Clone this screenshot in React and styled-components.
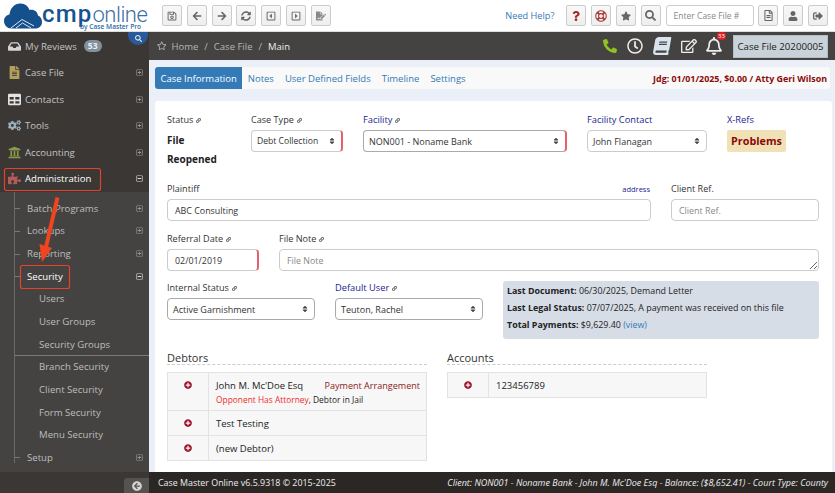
import React from 'react'
import styled, { createGlobalStyle } from 'styled-components'
import {
  FaRegSave, FaArrowLeft, FaArrowRight, FaSyncAlt, FaRegCaretSquareLeft, FaRegCaretSquareRight,
  FaQuestion, FaRegLifeRing, FaStar, FaSearch, FaRegFileAlt, FaUser, FaSignOutAlt, FaInbox,
  FaFileAlt, FaTable, FaCogs, FaUniversity, FaPuzzlePiece, FaRegPlusSquare, FaRegMinusSquare,
  FaRegStar, FaPhone, FaRegClock, FaBook, FaRegEdit, FaRegBell, FaLink, FaSort, FaPlusCircle,
  FaArrowCircleLeft, FaFileSignature,
} from 'react-icons/fa'

const Global = createGlobalStyle`
  html, body { margin: 0; padding: 0; height: 100%; overflow: hidden; }
  body { font-family: "Open Sans", "Liberation Sans", sans-serif; font-size: 10px; color: #333; }
  * { box-sizing: border-box; }
`
const Page = styled.div`
  position: relative;
  width: 835px;
  height: 493px;
  display: flex;
  flex-direction: column;
  overflow: hidden;
  background: #fff;
`
const Header = styled.header`
  height: 32px;
  flex: none;
  display: flex;
  align-items: center;
  background: #fff;
  border-bottom: 1px solid #ddd;
`
const Logo = styled.div`
  width: 162px;
  flex: none;
  display: flex;
  padding-left: 4px;
  height: 31px;
  & > svg { margin-top: 3px; }
`
const LogoText = styled.div`
  display: flex;
  flex-direction: column;
`
const LogoWord = styled.div`
  height: 23px;
  font-family: Roboto, "Open Sans", sans-serif;
  font-size: 24px;
  line-height: 28px;
  letter-spacing: 1.2px;
  color: #16548f;
  font-weight: 500;
  white-space: nowrap;
  & span { font-size: 22px; font-weight: 300; color: #3f6f9f; letter-spacing: -0.5px; }
`
const LogoSub = styled.div`
  font-size: 6.6px;
  line-height: 7px;
  font-weight: 600;
  color: #2d6aa5;
  margin-left: 38px;
  white-space: nowrap;
`
const Tools = styled.div`
  display: flex;
  gap: 4.8px;
  align-items: center;
`
const ToolButton = styled.button`
  width: 20px;
  height: 21px;
  padding: 0;
  display: flex;
  align-items: center;
  justify-content: center;
  background: linear-gradient(#f8f8f8, #eeeeee);
  border: 1px solid #ccc;
  border-radius: 2px;
  color: ${(p) => p.$color || '#666'};
  font-size: ${(p) => p.$size || 10}px;
`
const HelpLink = styled.a`
  margin-left: auto;
  margin-right: 12px;
  color: #337ab7;
  font-size: 9.2px;
`
const CaseSearch = styled.input`
  width: 88px;
  height: 21px;
  border: 1px solid #ccc;
  border-radius: 3px;
  padding: 0 7px;
  font: 8.5px "Open Sans", sans-serif;
  &::placeholder { color: #888; }
`
const RightTools = styled(Tools)`
  margin-right: 7px;
`
const Body = styled.div`
  flex: 1;
  display: flex;
  min-height: 0;
`
const Sidebar = styled.nav`
  width: 149px;
  flex: none;
  background: #3a3734;
  position: relative;
  padding-top: 1px;
`
const SearchTab = styled.div`
  position: absolute;
  top: 0;
  right: 1px;
  width: 20px;
  height: 13px;
  border-radius: 0 0 10px 10px;
  background: #2a5a9c;
  color: #dfe8f4;
  font-size: 7px;
  display: flex;
  align-items: center;
  justify-content: center;
`
const NavItem = styled.div`
  height: 26.5px;
  display: flex;
  align-items: center;
  padding: 0 6px 0 7px;
  font-size: 9.6px;
  color: ${(p) => (p.$active ? '#fff' : '#c4c4c4')};
`
const NavIcon = styled.span`
  width: 15px;
  margin-right: 3px;
  display: flex;
  justify-content: center;
  font-size: 13px;
  color: ${(p) => p.$color || '#d5d5d5'};
`
const Badge = styled.span`
  margin-left: 7px;
  background: #7f929e;
  color: #eee;
  font-size: 8.5px;
  font-weight: 700;
  padding: 0 4px;
  line-height: 12px;
  border-radius: 7px;
`
const TreeIcon = styled.span`
  margin-left: auto;
  font-size: 7px;
  display: flex;
  color: ${(p) => (p.$open ? '#ddd' : '#999')};
`
const SubNav = styled.div`
  background: #454341;
  padding: 5px 0 4px 14px;
  height: 280px;
`
const SubList = styled.div`
  border-left: 1px solid #6b6b69;
  height: 100%;
  margin-top: -5px;
  padding-top: 5px;
`
const SubItem = styled.div`
  position: relative;
  height: 22.65px;
  display: flex;
  align-items: center;
  padding: 0 6px 0 12px;
  font-size: 9.6px;
  color: ${(p) => (p.$active ? '#fff' : '#bdbdbd')};
  &::before {
    content: '';
    position: absolute;
    left: 0;
    top: 50%;
    width: 5px;
    border-top: 1px solid #7a7a78;
  }
`
const LeafItem = styled.div`
  height: 22.65px;
  display: flex;
  align-items: center;
  padding-left: 24px;
  font-size: 9.6px;
  color: #bdbdbd;
`
const SubDivider = styled.div`
  border-top: 1px solid #7c7c7a;
  margin-bottom: -1px;
`
const Main = styled.main`
  flex: 1;
  min-width: 0;
  display: flex;
  flex-direction: column;
  background: #ebf0f8;
`
const Crumbs = styled.div`
  height: 28px;
  flex: none;
  background: #454341;
  display: flex;
  align-items: center;
  padding: 0 7px 0 8px;
  font-size: 9.5px;
  color: #b5b5b5;
`
const CrumbText = styled.span`
  margin-left: 5px;
  & b { font-weight: 400; color: #eee; }
  & i { font-style: normal; margin: 0 6px; }
`
const StatusIcons = styled.div`
  margin-left: auto;
  display: flex;
  align-items: center;
  gap: 10px;
`
const StatusIcon = styled.span`
  position: relative;
  display: flex;
  margin-left: ${(p) => p.$pull || 0}px;
  font-size: ${(p) => p.$size || 16}px;
  color: ${(p) => p.$color || '#eee'};
  & > svg { transform: ${(p) => p.$tilt || 'none'}; }
`
const Count = styled.span`
  position: absolute;
  top: -5px;
  right: -3px;
  min-width: 9px;
  height: 8px;
  border-radius: 4px;
  background: #e02020;
  color: #fff;
  font-size: 6px;
  line-height: 8px;
  text-align: center;
`
const CaseButton = styled.div`
  width: 95px;
  height: 23px;
  background: #c9d1d9;
  border: 1px solid #b5bdc6;
  color: #222;
  font-size: 9.7px;
  display: flex;
  align-items: center;
  justify-content: center;
  white-space: nowrap;
`
const Tabs = styled.div`
  margin: 7px 5px 0 6px;
  height: 22px;
  flex: none;
  background: #f9f9f9;
  border-radius: 3px;
  display: flex;
  align-items: center;
  font-size: 9.5px;
`
const Tab = styled.a`
  height: 22px;
  display: flex;
  align-items: center;
  padding: 0 5.5px;
  color: ${(p) => (p.$active ? '#fff' : '#337ab7')};
  background: ${(p) => (p.$active ? '#337ab7' : 'none')};
  border-radius: ${(p) => (p.$active ? '3px 0 0 3px' : '0')};
`
const Judgment = styled.div`
  margin-left: auto;
  margin-right: 3px;
  color: #8b0a0a;
  font-weight: 700;
  font-size: 8.9px;
`
const Card = styled.section`
  margin: 12px 3px 0 6px;
  flex: 1;
  min-height: 0;
  background: #fff;
  border-radius: 3px 3px 0 0;
  padding: 11px 13px 0 12px;
`
const Row = styled.div`
  display: flex;
  gap: 20px;
  height: ${(p) => p.$h}px;
`
const Field = styled.div`
  width: ${(p) => p.$w}px;
  flex: none;
`
const Label = styled.div`
  height: 15px;
  margin-bottom: 3px;
  line-height: 14px;
  font-size: ${(p) => (p.$link ? 9.3 : 9.1)}px;
  color: ${(p) => (p.$link ? '#1c1c92' : '#333')};
  display: flex;
  align-items: flex-end;
  justify-content: ${(p) => (p.$split ? 'space-between' : 'flex-start')};
  white-space: nowrap;
`
const LinkMark = styled(FaLink)`
  font-size: 5px;
  margin: 0 0 4px 3px;
  color: #555;
`
const AddressLink = styled.a`
  color: #1c1c92;
  font-size: 7.5px;
  padding-right: 1px;
`
const StatusStack = styled.div`
  padding-top: 1px;
`
const StatusValue = styled.div`
  font-weight: 700;
  font-size: 10px;
  line-height: 19px;
  color: #222;
`
const inputCss = `
  width: 100%;
  height: 22px;
  display: flex;
  align-items: center;
  background: #fff;
  border: 1px solid #ccc;
  border-radius: 4px;
  padding: 0 7px;
  font: 8.9px "Open Sans", sans-serif;
  color: #333;
`
const TextInput = styled.input`
  ${inputCss}
  &::placeholder { color: #888; }
  border-right: ${(p) => (p.$required ? '2px solid #e4606d' : '1px solid #ccc')};
`
const NoteArea = styled.textarea`
  ${inputCss}
  display: block;
  padding-top: 4px;
  resize: vertical;
  &::placeholder { color: #888; }
`
const SelectBox = styled.div`
  ${inputCss}
  padding: 0 5px;
  justify-content: space-between;
  border-color: ${(p) => (p.$dark ? '#aaa' : '#ccc')};
  border-right: ${(p) => (p.$required ? '2px solid #e4606d' : `1px solid ${p.$dark ? '#aaa' : '#ccc'}`)};
  font-size: ${(p) => p.$size || 9}px;
  & svg { font-size: 8px; color: #444; }
`
const Problems = styled.div`
  width: 59px;
  height: 22px;
  background: #f0e2b6;
  border-radius: 2px;
  color: #8b0a0a;
  font-weight: 700;
  font-size: 10.8px;
  line-height: 21px;
  display: flex;
  justify-content: center;
`
const InfoBox = styled.div`
  width: 316px;
  height: 58px;
  margin-top: 1px;
  background: #d6dde7;
  border-radius: 3px;
  padding: 1px 4px;
  font-size: 8.9px;
  line-height: 17px;
  color: #222;
  white-space: nowrap;
  & b { font-weight: 700; }
  & a { color: #337ab7; }
`
const Split = styled.div`
  display: flex;
  gap: 20px;
`
const Block = styled.div`
  width: 260px;
`
const Heading = styled.h4`
  margin: 0 0 7px;
  font-weight: 400;
  font-size: 11px;
  line-height: 15px;
  color: #333;
  height: 15px;
  border-bottom: 1px dashed #ccc;
`
const Table = styled.div`
  border: 1px solid #e3e3e3;
  background: #f7f7f7;
`
const TableRow = styled.div`
  display: flex;
  height: ${(p) => p.$h}px;
  & + & { border-top: 1px solid #e3e3e3; }
`
const AddCell = styled.div`
  width: 41px;
  flex: none;
  border-right: 1px solid #e3e3e3;
  display: flex;
  justify-content: center;
  padding-top: 8px;
  color: #a0102a;
  font-size: 8px;
`
const MainCell = styled.div`
  flex: 1;
  padding: 6px 6px 0 7px;
  font-size: 9.5px;
  line-height: 14px;
  color: #222;
`
const CellLine = styled.div`
  display: flex;
  justify-content: space-between;
`
const Arrangement = styled.span`
  color: #8b1a1a;
  font-size: 9.05px;
`
const Flags = styled.div`
  font-size: 8.4px;
  line-height: 13px;
  & em { font-style: normal; color: #f02b2b; }
`
const Footer = styled.footer`
  height: 21px;
  flex: none;
  display: flex;
  background: #2a2725;
`
const SideFoot = styled.div`
  width: 149px;
  flex: none;
  display: flex;
  justify-content: flex-end;
  align-items: flex-end;
  background: #3a3734;
`
const Collapse = styled.div`
  width: 25px;
  height: 15px;
  background: #55534f;
  border-radius: 3px 0 0 0;
  color: #d5d5d5;
  font-size: 10px;
  display: flex;
  align-items: center;
  justify-content: center;
`
const FootBar = styled.div`
  flex: 1;
  display: flex;
  align-items: center;
  justify-content: space-between;
  padding: 0 7px 0 9px;
  color: #eee;
  font-size: 8.9px;
`
const FootInfo = styled.span`
  font-style: italic;
  font-size: 9px;
`
const Marks = styled.svg`
  position: absolute;
  left: 0;
  top: 0;
  pointer-events: none;
`

const Link = () => <LinkMark />

const Cloud = () => (
  <svg width="38" height="26" viewBox="0 0 38 26">
    <path d="M8 25.500C3 25.500 0 22 0 18C0 14.500 2.500 12 5.500 11.500C6 5 11 0 17 .5C21 .8 24 3 25.500 7C30 6 33.500 8.500 34 12.500C36.500 13.500 38 16 38 19C38 23 35 25.500 31.500 25.500Z" fill="#14508c" />
    <path d="M7 25L18 16.500L30 23M12 25L18.500 20L27 25" fill="none" stroke="#d8e6f3" strokeWidth="1" />
  </svg>
)

const sections = ['Case File', 'Contacts', 'Tools', 'Accounting']
const sectionIcons = [
  [FaFileAlt, '#b3a05e'],
  [FaTable, '#e2e2e2'],
  [FaCogs, '#9fb0bd'],
  [FaUniversity, '#8b9a4b'],
]

export default function App() {
  return (
    <Page>
      <Global />
      <Header>
        <Logo>
          <Cloud />
          <LogoText>
            <LogoWord>cmp<span>online</span></LogoWord>
            <LogoSub>by Case Master Pro</LogoSub>
          </LogoText>
        </Logo>
        <Tools>
          <ToolButton><FaRegSave /></ToolButton>
          <ToolButton><FaArrowLeft /></ToolButton>
          <ToolButton><FaArrowRight /></ToolButton>
          <ToolButton><FaSyncAlt /></ToolButton>
          <ToolButton><FaRegCaretSquareLeft /></ToolButton>
          <ToolButton><FaRegCaretSquareRight /></ToolButton>
          <ToolButton $color="#888"><FaFileSignature /></ToolButton>
        </Tools>
        <HelpLink>Need Help?</HelpLink>
        <RightTools>
          <ToolButton $color="#a52a2a"><FaQuestion /></ToolButton>
          <ToolButton $color="#a84040" $size={12}><FaRegLifeRing /></ToolButton>
          <ToolButton><FaStar /></ToolButton>
          <ToolButton $size={11}><FaSearch /></ToolButton>
          <CaseSearch placeholder="Enter Case File #" />
          <ToolButton $size={11}><FaRegFileAlt /></ToolButton>
          <ToolButton><FaUser /></ToolButton>
          <ToolButton><FaSignOutAlt /></ToolButton>
        </RightTools>
      </Header>

      <Body>
        <Sidebar>
          <SearchTab><FaSearch /></SearchTab>
          <NavItem>
            <NavIcon><FaInbox /></NavIcon>My Reviews<Badge>53</Badge>
          </NavItem>
          {sections.map((name, i) => {
            const [Icon, color] = sectionIcons[i]
            return (
              <NavItem key={name}>
                <NavIcon $color={color}><Icon /></NavIcon>{name}
                <TreeIcon><FaRegPlusSquare /></TreeIcon>
              </NavItem>
            )
          })}
          <NavItem $active>
            <NavIcon $color="#b45a5a"><FaPuzzlePiece /></NavIcon>Administration
            <TreeIcon $open><FaRegMinusSquare /></TreeIcon>
          </NavItem>
          <SubNav>
            <SubList>
              {['Batch Programs', 'Lookups', 'Reporting'].map((name) => (
                <SubItem key={name}>{name}<TreeIcon><FaRegPlusSquare /></TreeIcon></SubItem>
              ))}
              <SubItem $active>Security<TreeIcon $open><FaRegMinusSquare /></TreeIcon></SubItem>
              <LeafItem>Users</LeafItem>
              <LeafItem>User Groups</LeafItem>
              <LeafItem>Security Groups</LeafItem>
              <SubDivider />
              <LeafItem>Branch Security</LeafItem>
              <LeafItem>Client Security</LeafItem>
              <LeafItem>Form Security</LeafItem>
              <LeafItem>Menu Security</LeafItem>
              <SubItem>Setup<TreeIcon><FaRegPlusSquare /></TreeIcon></SubItem>
            </SubList>
          </SubNav>
        </Sidebar>

        <Main>
          <Crumbs>
            <FaRegStar />
            <CrumbText>Home<i>/</i>Case File<i>/</i><b>Main</b></CrumbText>
            <StatusIcons>
              <StatusIcon $color="#8fc31f" $size={14} $tilt="scaleX(-1)"><FaPhone /></StatusIcon>
              <StatusIcon $size={16}><FaRegClock /></StatusIcon>
              <StatusIcon $color="#d9e4ef" $size={18} $tilt="skewX(-10deg)"><FaBook /></StatusIcon>
              <StatusIcon $size={16}><FaRegEdit /></StatusIcon>
              <StatusIcon $size={18} $pull={-2}><FaRegBell /><Count>33</Count></StatusIcon>
              <CaseButton>Case File 20200005</CaseButton>
            </StatusIcons>
          </Crumbs>

          <Tabs>
            <Tab $active>Case Information</Tab>
            <Tab>Notes</Tab>
            <Tab>User Defined Fields</Tab>
            <Tab>Timeline</Tab>
            <Tab>Settings</Tab>
            <Judgment>Jdg: 01/01/2025, $0.00 / Atty Geri Wilson</Judgment>
          </Tabs>

          <Card>
            <Row $h={69}>
              <Field $w={64}>
                <Label>Status<Link /></Label>
                <StatusStack>
                  <StatusValue>File</StatusValue>
                  <StatusValue>Reopened</StatusValue>
                </StatusStack>
              </Field>
              <Field $w={92}>
                <Label>Case Type<Link /></Label>
                <SelectBox $required $size={8.6}>Debt Collection<FaSort /></SelectBox>
              </Field>
              <Field $w={204}>
                <Label $link>Facility<Link /></Label>
                <SelectBox $required $dark>NON001 - Noname Bank<FaSort /></SelectBox>
              </Field>
              <Field $w={120}>
                <Label $link>Facility Contact</Label>
                <SelectBox>John Flanagan<FaSort /></SelectBox>
              </Field>
              <Field $w={60}>
                <Label $link>X-Refs</Label>
                <Problems>Problems</Problems>
              </Field>
            </Row>
            <Row $h={50}>
              <Field $w={484}>
                <Label $split>Plaintiff<AddressLink>address</AddressLink></Label>
                <TextInput readOnly value="ABC Consulting" />
              </Field>
              <Field $w={148}>
                <Label>Client Ref.</Label>
                <TextInput placeholder="Client Ref." />
              </Field>
            </Row>
            <Row $h={49}>
              <Field $w={92}>
                <Label>Referral Date<Link /></Label>
                <TextInput $required readOnly value="02/01/2019" />
              </Field>
              <Field $w={540}>
                <Label>File Note<Link /></Label>
                <NoteArea placeholder="File Note" />
              </Field>
            </Row>
            <Row $h={70}>
              <Field $w={148}>
                <Label>Internal Status<Link /></Label>
                <SelectBox $dark>Active Garnishment<FaSort /></SelectBox>
              </Field>
              <Field $w={148}>
                <Label $link>Default User<Link /></Label>
                <SelectBox $dark>Teuton, Rachel<FaSort /></SelectBox>
              </Field>
              <InfoBox>
                <div><b>Last Document:</b> 06/30/2025, Demand Letter</div>
                <div><b>Last Legal Status:</b> 07/07/2025, A payment was received on this file</div>
                <div><b>Total Payments:</b> $9,629.40 <a>(view)</a></div>
              </InfoBox>
            </Row>
            <Split>
              <Block>
                <Heading>Debtors</Heading>
                <Table>
                  <TableRow $h={37}>
                    <AddCell><FaPlusCircle /></AddCell>
                    <MainCell>
                      <CellLine>John M. Mc'Doe Esq<Arrangement>Payment Arrangement</Arrangement></CellLine>
                      <Flags><em>Opponent Has Attorney</em>, Debtor in Jail</Flags>
                    </MainCell>
                  </TableRow>
                  <TableRow $h={25}>
                    <AddCell><FaPlusCircle /></AddCell>
                    <MainCell>Test Testing</MainCell>
                  </TableRow>
                  <TableRow $h={25}>
                    <AddCell><FaPlusCircle /></AddCell>
                    <MainCell>(new Debtor)</MainCell>
                  </TableRow>
                </Table>
              </Block>
              <Block>
                <Heading>Accounts</Heading>
                <Table>
                  <TableRow $h={24}>
                    <AddCell><FaPlusCircle /></AddCell>
                    <MainCell>123456789</MainCell>
                  </TableRow>
                </Table>
              </Block>
            </Split>
          </Card>
        </Main>
      </Body>

      <Footer>
        <SideFoot>
          <Collapse><FaArrowCircleLeft /></Collapse>
        </SideFoot>
        <FootBar>
          <span>Case Master Online v6.5.9318 © 2015-2025</span>
          <FootInfo>Client: NON001 - Noname Bank - John M. Mc'Doe Esq - Balance: ($8,652.41) - Court Type: County</FootInfo>
        </FootBar>
      </Footer>

      {/* the red call-outs drawn on top of the screenshot */}
      <Marks width="835" height="493">
        <rect x="4.500" y="168.500" width="96" height="22" rx="2" fill="none" stroke="#e8412a" strokeWidth="1.200" />
        <rect x="20.500" y="265.500" width="49" height="23" rx="2" fill="none" stroke="#e8412a" strokeWidth="1.200" />
        <path d="M57.500 197.500L46 247" stroke="#f0451f" strokeWidth="4" fill="none" />
        <path d="M39.500 244L52 248L42 262Z" fill="#f0451f" />
      </Marks>
    </Page>
  )
}
